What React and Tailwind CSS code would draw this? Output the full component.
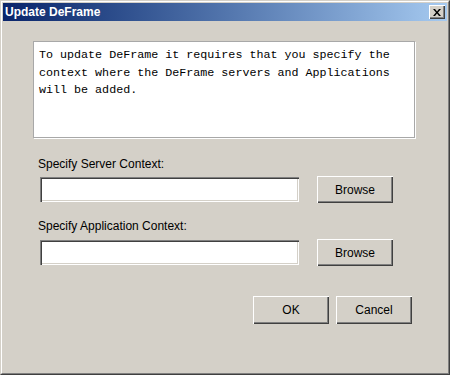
export default function App() {
  const raised =
    "bg-[#d4d0c8] shadow-[inset_1px_1px_0_#ffffff,inset_-1px_-1px_0_#404040,inset_-2px_-2px_0_#808080]";
  const sunken =
    "bg-white shadow-[inset_1px_1px_0_#808080,inset_2px_2px_0_#404040,inset_-1px_-1px_0_#ffffff,inset_-2px_-2px_0_#d4d0c8]";

  return (
    <div
      className="w-[450px] h-[375px] border border-t-[#d4d0c8] border-l-[#d4d0c8] border-r-[#404040] border-b-[#404040] bg-[#d4d0c8]"
      style={{ fontFamily: '"Liberation Sans", Arial, sans-serif' }}
    >
      <div className="h-full border border-t-white border-l-white border-r-[#808080] border-b-[#808080] p-[1px] flex flex-col">
        {/* title bar */}
        <div className="h-[18px] flex items-center justify-between bg-gradient-to-r from-[#0a246a] to-[#a6caf0] pl-[2px] pr-[2px]">
          <span className="text-white font-bold text-[12px] leading-none">Update DeFrame</span>
          <div className={`${raised} w-[16px] h-[14px] flex items-center justify-center`}>
            <svg width="8" height="7" viewBox="0 0 8 7">
              <path d="M0 0h2l2 2.5L6 0h2L5 3.5 8 7H6L4 4.5 2 7H0l3-3.5z" fill="#000" />
            </svg>
          </div>
        </div>

        {/* body */}
        <div className="flex flex-col">
          <div className="mt-[20px] ml-[30px] w-[382px] h-[97px] bg-white border border-[#a8a8a8] shadow-[1px_1px_0_#ffffff] pt-[5px] pl-[5px]">
            <p
              className="text-[11.7px] leading-[17.5px] text-black whitespace-pre"
              style={{ fontFamily: '"Liberation Mono", "Courier New", monospace' }}
            >
              {"To update DeFrame it requires that you specify the\ncontext where the DeFrame servers and Applications\nwill be added."}
            </p>
          </div>

          <div className="mt-[19px] ml-[35px] text-[12px] leading-[14px] text-black">Specify Server Context:</div>
          <div className="mt-[5px] flex items-start">
            <div className={`${sunken} ml-[37px] mt-[1px] w-[259px] h-[25px]`} />
            <button className={`${raised} ml-[18px] w-[76px] h-[27px] text-[12px] text-black`}>Browse</button>
          </div>

          <div className="mt-[16px] ml-[35px] text-[12px] leading-[14px] text-black">Specify Application Context:</div>
          <div className="mt-[6px] flex items-start">
            <div className={`${sunken} ml-[37px] mt-[1px] w-[259px] h-[25px]`} />
            <button className={`${raised} ml-[18px] w-[76px] h-[27px] text-[12px] text-black`}>Browse</button>
          </div>

          <div className="mt-[30px] flex">
            <button className={`${raised} ml-[250px] w-[76px] h-[28px] text-[12px] text-black`}>OK</button>
            <button className={`${raised} ml-[7px] w-[76px] h-[28px] text-[12px] text-black`}>Cancel</button>
          </div>
        </div>
      </div>
    </div>
  );
}
